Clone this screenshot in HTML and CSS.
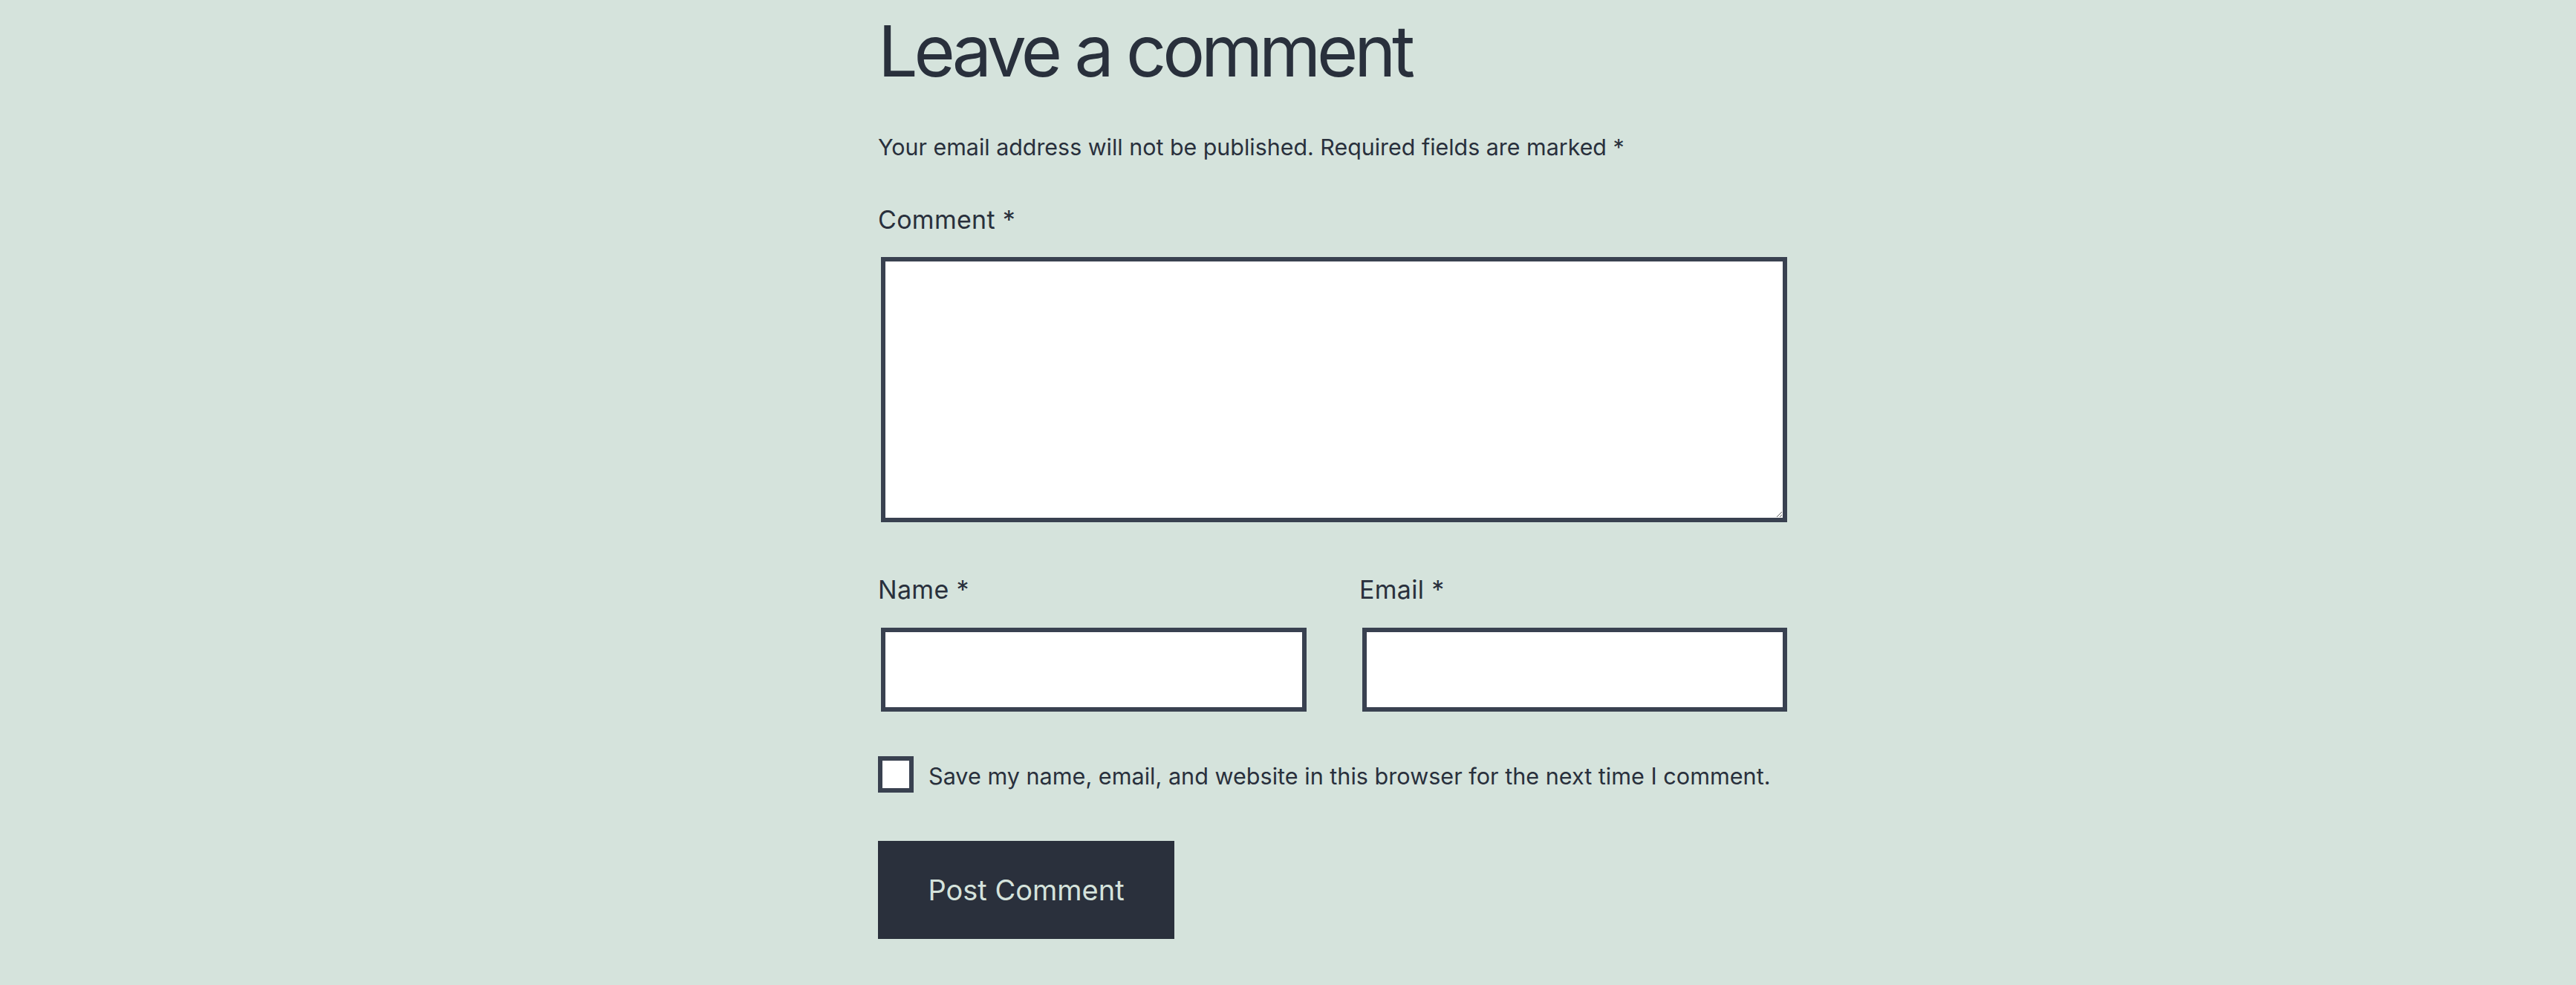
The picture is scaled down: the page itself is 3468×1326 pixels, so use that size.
FILE: index.html
```html
<!DOCTYPE html>
<html lang="en">
<head>
<meta charset="utf-8">
<title>Leave a comment</title>
<link rel="stylesheet" href="styles.css">
</head>
<body>
<div class="page">
  <form class="comment-form">
    <h2 class="title">Leave a comment</h2>
    <p class="notes">Your email address will not be published. Required fields are marked *</p>
    <div class="field">
      <label class="label" for="comment">Comment *</label>
      <textarea id="comment" class="textarea"></textarea>
    </div>
    <div class="row">
      <div class="field">
        <label class="label" for="name">Name *</label>
        <input id="name" class="input" type="text">
      </div>
      <div class="field">
        <label class="label" for="email">Email *</label>
        <input id="email" class="input" type="email">
      </div>
    </div>
    <div class="consent">
      <span class="checkbox"></span>
      <span class="consent-text">Save my name, email, and website in this browser for the next time I comment.</span>
    </div>
    <div class="actions">
      <button type="button" class="submit">Post Comment</button>
    </div>
  </form>
</div>
</body>
</html>
```

FILE: styles.css
```css
html, body {
  margin: 0;
  padding: 0;
}
body {
  background: #d5e3dc;
  color: #29303c;
  font-family: Inter, "Noto Sans", sans-serif;
}
.page {
  width: 1228px;
  margin-left: calc(50% - 552px);
  padding-top: 17px;
}
.comment-form {
  display: flex;
  flex-direction: column;
}
.title {
  margin: 0;
  font-size: 95px;
  line-height: 104px;
  font-weight: 400;
  letter-spacing: -5.2px;
}
.notes {
  margin: 56px 0 0;
  font-size: 30.4px;
  line-height: 42px;
}
.field {
  display: flex;
  flex-direction: column;
  margin-top: 55px;
}
.label {
  font-size: 34px;
  line-height: 44px;
  margin-bottom: 28px;
  letter-spacing: 0.3px;
}
.textarea {
  box-sizing: border-box;
  width: 1220px;
  height: 357px;
  margin: 0 4px;
  border: 6px solid #394150;
  background: #fff;
  resize: vertical;
  outline: none;
  border-radius: 0;
}
.row {
  display: grid;
  grid-template-columns: 581px 580px;
  column-gap: 67px;
  margin-top: 14px;
}
.row .label {
  margin-bottom: 29px;
}
.input {
  box-sizing: border-box;
  height: 113px;
  margin: 0 4px;
  border: 6px solid #394150;
  background: #fff;
  border-radius: 0;
  outline: none;
  padding: 0;
}
.consent {
  display: flex;
  align-items: center;
  gap: 20px;
  margin-top: 60px;
}
.checkbox {
  box-sizing: border-box;
  width: 48px;
  height: 49px;
  border: 6px solid #394150;
  background: #fff;
  flex: none;
}
.consent-text {
  font-size: 30.6px;
  line-height: 44px;
  padding-top: 4px;
  white-space: nowrap;
}
.actions {
  margin-top: 65px;
}
.submit {
  width: 399px;
  height: 132px;
  border: 0;
  border-radius: 0;
  background: #2a303c;
  color: #d5e3dc;
  font-family: Inter, "Noto Sans", sans-serif;
  font-size: 38px;
  padding: 0;
  display: flex;
  align-items: center;
  justify-content: center;
}
```
